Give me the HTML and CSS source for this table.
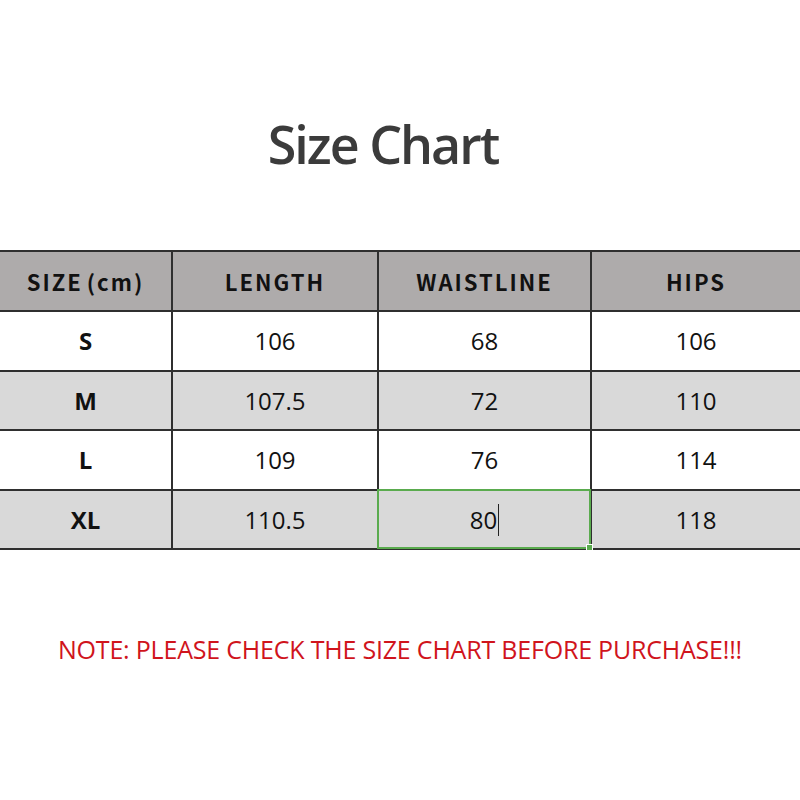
FILE: index.html
```html
<!DOCTYPE html>
<html>
<head>
<meta charset="utf-8">
<link rel="stylesheet" href="styles.css">
</head>
<body>
<div class="page">
  <h1 class="title">Size Chart</h1>
  <table class="chart">
    <colgroup>
      <col class="c1"><col class="c2"><col class="c3"><col class="c4">
    </colgroup>
    <thead>
      <tr class="head">
        <th>SIZE<span class="paren">(cm)</span></th><th>LENGTH</th><th>WAISTLINE</th><th>HIPS</th>
      </tr>
    </thead>
    <tbody>
      <tr class="odd"><td class="sz">S</td><td>106</td><td>68</td><td>106</td></tr>
      <tr class="even"><td class="sz">M</td><td>107.5</td><td>72</td><td>110</td></tr>
      <tr class="odd"><td class="sz">L</td><td>109</td><td>76</td><td>114</td></tr>
      <tr class="even"><td class="sz">XL</td><td>110.5</td><td class="active"><span class="val">80<span class="caret"></span></span><span class="sel"><span class="handle"></span></span></td><td>118</td></tr>
    </tbody>
  </table>
  <p class="note">NOTE: PLEASE CHECK THE SIZE CHART BEFORE PURCHASE!!!</p>
</div>
</body>
</html>
```

FILE: styles.css
```css
html, body {
  margin: 0;
  padding: 0;
  background: #ffffff;
}
.page {
  width: 800px;
  height: 800px;
  display: flex;
  flex-direction: column;
  align-items: center;
}
.title {
  margin: 108px 34px 0 0;
  font-family: "Open Sans", sans-serif;
  font-weight: 600;
  font-size: 52px;
  line-height: 72px;
  color: #3b3b3b;
  letter-spacing: -2px;
}
.chart {
  margin-top: 70px;
  width: 800px;
  border-collapse: collapse;
  table-layout: fixed;
}
.c1 { width: 172px; }
.c2 { width: 206px; }
.c3 { width: 213px; }
.c4 { width: 209px; }
.chart th, .chart td {
  height: 57.6px;
  padding: 0;
  text-align: center;
  vertical-align: middle;
  border: 2px solid #2f2f2f;
}
.chart th { height: 58px; }
.chart tr > :first-child { border-left: none; }
.chart tr > :last-child { border-right: none; }
.head th {
  background: #aeabab;
  font-family: "Noto Sans CJK SC", "DejaVu Sans", sans-serif;
  font-weight: 700;
  font-size: 22px;
  letter-spacing: 2px;
  color: #111;
}
.paren {
  margin-left: 4px;
}
.chart td {
  font-family: "Open Sans", sans-serif;
  font-size: 24px;
  color: #111;
}
.chart td.sz {
  font-weight: 700;
}
.odd td { background: #ffffff; }
.even td { background: #d9d9d9; }
.chart td.active {
  position: relative;
}
.val {
  display: inline-flex;
  align-items: center;
}
.caret {
  display: inline-block;
  width: 1px;
  height: 32px;
  background: #222;
  margin-left: 1px;
}
.sel {
  position: absolute;
  top: -2px;
  left: -2px;
  right: -1px;
  bottom: -1px;
  border: 2px solid #5aab4e;
}
.handle {
  position: absolute;
  right: -4px;
  bottom: -4px;
  width: 5px;
  height: 5px;
  background: #5aab4e;
  border: 1px solid #fff;
}
.note {
  margin: 82px 0 0 0;
  font-family: "Open Sans", sans-serif;
  font-weight: 500;
  font-size: 25px;
  color: #d0141c;
  letter-spacing: -0.2px;
  white-space: nowrap;
}
```
